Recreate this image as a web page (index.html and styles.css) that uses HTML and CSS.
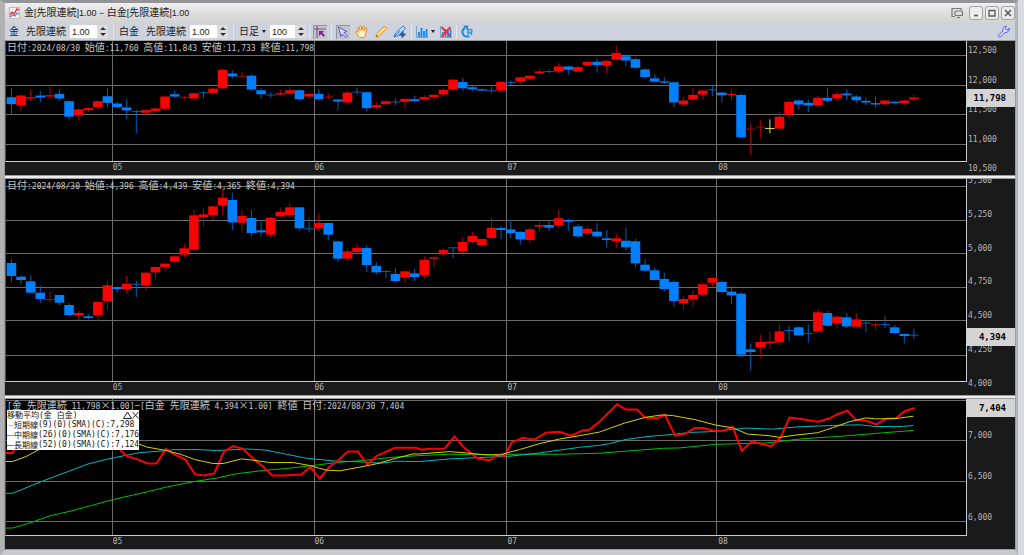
FILE: index.html
```html
<!DOCTYPE html>
<html lang="ja">
<head>
    <meta charset="UTF-8">
    <meta name="viewport" content="width=device-width, initial-scale=1.0">
    <title>金[先限連続]1.00 - 白金[先限連続]1.00</title>
    <link rel="stylesheet" href="styles.css">
</head>
<body>
    <div class="window">
        <header class="titlebar">
            <svg class="app-icon" width="11" height="12" viewBox="0 0 11 12">
                <rect x="0.5" y="0.5" width="10" height="11" fill="#f4f0f0" stroke="#c4bcbc"/>
                <path d="M1 8l2-3 2 2 3-5 2 1" fill="none" stroke="#e0383c" stroke-width="1.4"/>
                <path d="M1 10l3-2 2 1 2-3 2 1" fill="none" stroke="#4a86d8" stroke-width="1.2"/>
            </svg>
            <h1><span>金</span>[<span>先限連続</span>]1.00 − <span>白金</span>[<span>先限連続</span>]1.00</h1>
            <div class="window-buttons">
                <button class="plain" aria-label="別ウィンドウ">
                    <svg width="12" height="12" viewBox="0 0 12 12" fill="none" stroke="#777" stroke-width="1.2">
                        <path d="M4 9.500H1v-8h9V3"/>
                        <rect x="4" y="4" width="7.500" height="4.500" rx="1"/>
                        <path d="M6 10.500h3"/>
                    </svg>
                </button>
                <button aria-label="最小化"><svg width="12" height="12" viewBox="0 0 12 12"><path d="M4 8.500h4" stroke="#555" stroke-width="1.600"/></svg></button>
                <button aria-label="最大化"><svg width="12" height="12" viewBox="0 0 12 12"><path d="M3 3.500h6M3 3v6h6V3" fill="none" stroke="#555" stroke-width="1.300"/></svg></button>
                <button aria-label="閉じる"><svg width="12" height="12" viewBox="0 0 12 12"><path d="M3 3l6 6M9 3l-6 6" stroke="#555" stroke-width="1.500"/></svg></button>
            </div>
        </header>

        <div class="toolbar">
            <div class="tool-group">
                <span>金</span>
                <label for="goldRatio">先限連続</label>
                <div class="spinner">
                    <input type="text" id="goldRatio" value="1.00">
                    <span class="arrows"><button class="up" aria-label="増やす"></button><button class="down" aria-label="減らす"></button></span>
                </div>
            </div>
            <div class="tool-group">
                <span>白金</span>
                <label for="platinumRatio">先限連続</label>
                <div class="spinner">
                    <input type="text" id="platinumRatio" value="1.00">
                    <span class="arrows"><button class="up" aria-label="増やす"></button><button class="down" aria-label="減らす"></button></span>
                </div>
            </div>
            <div class="tool-group period">
                <button class="menu">日足<i class="caret"></i></button>
                <div class="spinner">
                    <input type="text" id="barCount" value="100" aria-label="本数">
                    <span class="arrows"><button class="up" aria-label="増やす"></button><button class="down" aria-label="減らす"></button></span>
                </div>
            </div>
            <div class="tool-group icons">
                <button class="icon pressed" aria-label="十字カーソル">
                    <svg width="12" height="12" viewBox="0 0 12 12">
                        <path d="M3 0v12M0 3h12" stroke="#8a4890" stroke-width="1.2"/>
                        <path d="M5 5h5L8.400 6.600 11 9.400 9.600 10.800 6.800 8 5 10z" fill="#8c1a98"/>
                    </svg>
                </button>
            </div>
            <div class="tool-group icons">
                <button class="icon pressed" aria-label="選択">
                    <svg width="12" height="12" viewBox="0 0 12 12"><path d="M1.500 1l8 4.500-2.500 1 3.500 3.500-1.500 1.500L5.500 8 4 10.500z" fill="#dedcff" stroke="#5850c8" stroke-linejoin="round"/></svg>
                </button>
                <button class="icon" aria-label="移動">
                    <svg width="14" height="14" viewBox="0 0 14 14"><path d="M4.600 12.500L2 9.200.8 7c0-1 1.200-1.200 2-.2l.8.8L2.300 3.400c-.2-1.200 1.200-1.400 1.600-.4L5 5.600 4.800 1.800c0-1.200 1.500-1.200 1.700 0L7 5.300l.9-3.600c.3-1 1.600-.8 1.500.3L9 5.800l1.700-2.400c.6-.8 1.700-.2 1.300.8l-1.300 3.900-.7 2.700-1.200 1.700z" fill="#fff3d2" stroke="#e58a1a" stroke-linejoin="round"/></svg>
                </button>
                <button class="icon" aria-label="鉛筆">
                    <svg width="14" height="14" viewBox="0 0 14 14"><path d="M2 12l1.200-3.600L10 1.600c.8-.6 2.800 1.200 2.300 2.200L5.400 10.700z" fill="#ffd98c" stroke="#e8921c" stroke-linejoin="round"/><path d="M1.500 12.500l.8-2.500 1.600 1.500z" fill="#a85a10"/><path d="M5 9.300l5.800-5.800" stroke="#fff6de"/></svg>
                </button>
                <button class="icon" aria-label="線の追加">
                    <svg width="14" height="14" viewBox="0 0 14 14"><path d="M1 12l1.500-4L10 1l2.500 2-5.500 7-4.500 1.500z" fill="#b8dcfa" stroke="#3878c8" stroke-linejoin="round"/><path d="M1.500 11.500L7 6" stroke="#3878c8"/><path d="M9.500 6.500v6M6.500 9.500h6" stroke="#1d4ea8" stroke-width="2"/></svg>
                </button>
            </div>
            <div class="tool-group icons">
                <button class="icon menu" aria-label="指標の追加">
                    <svg width="12" height="12" viewBox="0 0 12 12"><path d="M.5 0v11.500H12" fill="none" stroke="#7aa4cc"/><path d="M3 6v5M5.500 2v9M8 5v6M10.500 3v8" stroke="#1686ee" stroke-width="1.800"/></svg>
                    <i class="caret"></i>
                </button>
                <button class="icon" aria-label="指標の削除">
                    <svg width="12" height="12" viewBox="0 0 12 12"><path d="M.5 0v11.500H12" fill="none" stroke="#7aa4cc"/><path d="M3 6v5M5.500 3v8M8 5v6M10.500 3v8" stroke="#1686ee" stroke-width="1.600"/><path d="M1.500 1l9 9.500M10.500 1l-9 9.500" stroke="#e8343c" stroke-width="1.900"/></svg>
                </button>
            </div>
            <div class="tool-group icons reset">
                <button class="icon" aria-label="リセット">
                    <svg width="13" height="13" viewBox="0 0 13 13"><path d="M4 3C0 5 1 11 5.500 11.500h3" fill="none" stroke="#1c8ae0" stroke-width="2"/><path d="M2 .5h5v5z" fill="#1c8ae0"/><path d="M7 10V4.500h2.500a1.500 1.500 0 010 3H7M9.300 7.500L11 10" fill="none" stroke="#2c96ea" stroke-width="1.500"/></svg>
                </button>
            </div>
            <button class="icon settings" aria-label="設定">
                <svg width="13" height="13" viewBox="0 0 13 13"><path d="M1.500 10L6 6c-.6-2.500.8-4.800 3.500-5L8.300 3.300l.9 1.500 1.800.1L12.300 3c.3 2.800-1.800 4.900-4.300 4.500l-4.500 4.200c-1.200 1-3-.5-2-1.700z" fill="#dcdcff" stroke="#6460dc" stroke-linejoin="round"/></svg>
            </button>
        </div>

        <main class="panels">
            <section class="panel">
                <div class="plot">
                    <svg id="goldChart" viewBox="18 -57 2883 363" preserveAspectRatio="none"></svg>
                    <p class="readout"><span>日付</span>:2024/08/30 <span>始値</span>:11,760 <span>高値</span>:11,843 <span>安値</span>:11,733 <span>終値</span>:11,798</p>
                </div>
                <div class="scale gold">
                    <span>12,500</span><span>12,000</span><span>11,500</span><span>11,000</span><span>10,500</span>
                    <b class="last">11,798</b>
                </div>
                <div class="months"><span>05</span><span>06</span><span>07</span><span>08</span></div>
            </section>

            <section class="panel">
                <div class="plot">
                    <svg id="platinumChart" viewBox="18 9 2883 606" preserveAspectRatio="none"></svg>
                    <p class="readout"><span>日付</span>:2024/08/30 <span>始値</span>:4,396 <span>高値</span>:4,439 <span>安値</span>:4,365 <span>終値</span>:4,394</p>
                </div>
                <div class="scale platinum">
                    <span>5,500</span><span>5,250</span><span>5,000</span><span>4,750</span><span>4,500</span><span>4,250</span><span>4,000</span>
                    <b class="last">4,394</b>
                </div>
                <div class="months"><span>05</span><span>06</span><span>07</span><span>08</span></div>
            </section>

            <section class="panel">
                <div class="plot">
                    <svg id="spreadChart" viewBox="18 27 2883 411" preserveAspectRatio="none"></svg>
                    <p class="readout">[<span>金</span> <span>先限連続</span> 11,798<span>×</span>1.00]<span>−</span>[<span>白金</span> <span>先限連続</span> 4,394<span>×</span>1.00] <span>終値</span> <span>日付</span>:2024/08/30 7,404</p>
                    <div class="legend">
                        <div class="legend-title">
                            <div><span>移動平均</span>(<span>金</span> <span>白金</span>)</div>
                            <div class="legend-buttons">
                                <button aria-label="折りたたむ"><svg width="9" height="8" viewBox="0 0 9 8"><path d="M4.500 1L8.500 7.500H.5z" fill="none" stroke="#222"/></svg></button>
                                <button aria-label="閉じる"><svg width="7" height="8" viewBox="0 0 7 8"><path d="M.5 1l6 6.500M6.500 1l-6 6.500" stroke="#222"/></svg></button>
                            </div>
                        </div>
                        <div class="legend-row short"><span>短期線</span>(9)(0)(SMA)(C):7,298</div>
                        <div class="legend-row middle"><span>中期線</span>(26)(0)(SMA)(C):7,176</div>
                        <div class="legend-row long"><span>長期線</span>(52)(0)(SMA)(C):7,124</div>
                    </div>
                </div>
                <div class="scale spread">
                    <span>7,500</span><span>7,000</span><span>6,500</span><span>6,000</span>
                    <b class="last">7,404</b>
                </div>
                <div class="months"><span>05</span><span>06</span><span>07</span><span>08</span></div>
            </section>
        </main>
    </div>
    <script src="charts.js"></script>
</body>
</html>
```

FILE: styles.css
```css
* {
    box-sizing: border-box;
}

body {
    margin: 0;
    padding-right: 6px;
    height: 100vh;
    background: #dadae3;
    font-family: "Liberation Sans", "Noto Sans CJK JP", sans-serif;
    font-size: 10px;
    color: #222;
    overflow: hidden;
}

button {
    margin: 0;
    padding: 0;
    border: 0;
    background: none;
    font: inherit;
    color: inherit;
}

svg {
    display: block;
}

/* window frame */
.window {
    display: flex;
    flex-direction: column;
    height: 100%;
    border-top: 3px solid #929497;
    border-right: 3px solid #b4b4b8;
    border-bottom: 5px solid #c9c9cb;
    border-left: 5px solid #b2b2b2;
}

.titlebar {
    display: flex;
    align-items: center;
    gap: 4px;
    height: 20px;
    padding-left: 4px;
    background: linear-gradient(#f0f0f0, #dedede 50%, #d2d2d2);
}

.titlebar h1 {
    margin: 0;
    flex: 1;
    font-size: 9px;
    line-height: 16px;
    font-weight: normal;
    white-space: nowrap;
}

.titlebar h1 span {
    font-size: 10px;
}

.window-buttons {
    display: flex;
    gap: 2px;
}

.window-buttons button {
    padding: 1px;
    background: #ececec;
    border-radius: 3px;
    box-shadow: inset 0 0 0 1px #a4a4a4;
}

.window-buttons .plain {
    margin-right: 3px;
    background: none;
    box-shadow: none;
}

/* toolbar */
.toolbar {
    display: flex;
    align-items: center;
    height: 18px;
    padding-left: 4px;
    background: #ced2dc;
    border-bottom: 1px solid #a4a8b0;
}

.tool-group {
    display: flex;
    align-items: center;
    height: 14px;
    line-height: 14px;
    gap: 4px;
    margin-right: 5px;
    padding-right: 5px;
    border-right: 1px solid #e6e8ec;
}

.tool-group label {
    margin-left: 3px;
}

.tool-group.period {
    margin-right: 3px;
    padding-right: 3px;
}

.tool-group.icons {
    gap: 5px;
    margin-right: 4px;
    padding-right: 4px;
}

.tool-group.reset {
    border-right: 0;
}

.spinner {
    display: flex;
    width: 38px;
    height: 13px;
    background: #fff;
}

.period .spinner {
    width: 36px;
}

.spinner input {
    flex: 1;
    min-width: 0;
    padding: 0 0 0 2px;
    border: 0;
    background: none;
    font: inherit;
    font-size: 9px;
    color: #222;
}

.arrows {
    display: flex;
    flex-direction: column;
    width: 11px;
    background: #dcdcdc;
}

.arrows button {
    flex: 1;
    display: flex;
    align-items: center;
    justify-content: center;
}

.arrows button::before {
    content: "";
    border: 3px solid transparent;
}

.arrows .up::before {
    border-top: 0;
    border-bottom-color: #333;
}

.arrows .down::before {
    border-bottom: 0;
    border-top-color: #333;
}

.menu {
    display: flex;
    align-items: center;
    gap: 3px;
}

.caret {
    border: 2px solid transparent;
    border-top: 3px solid #222;
    border-bottom: 0;
}

.icon.pressed {
    padding: 1px;
    background: #c2c4cc;
    box-shadow: inset 1px 1px 0 #94969c;
}

.settings {
    margin-left: auto;
    margin-right: 5px;
}

/* chart panels */
.panels {
    flex: 1;
    min-height: 0;
    display: grid;
    grid-template-rows: 134fr 216fr 150fr;
    gap: 4px;
    padding-bottom: 1px;
    background: #eee;
}

.panel {
    display: grid;
    grid-template-columns: 1fr 48px;
    grid-template-rows: 1fr 13px;
    min-height: 0;
    background: #1a1a1a;
    box-shadow: 0 0 0 1px #9a9a9a;
    font-family: "DejaVu Sans Mono", "Noto Sans CJK JP", monospace;
    font-size: 8px;
    line-height: 12px;
    color: #b4b4b4;
}

.plot {
    position: relative;
    min-height: 0;
    background: #000;
    border-left: 1px solid #555;
    border-right: 1px solid #ccc;
    border-bottom: 1px solid #ccc;
}

.plot > svg {
    position: absolute;
    width: 100%;
    height: 100%;
}

.readout {
    position: relative;
    margin: 0;
    padding-left: 1px;
    white-space: nowrap;
    color: #c8c8c8;
}

.readout span {
    font-family: "Noto Sans CJK JP", sans-serif;
    font-size: 10px;
}

.scale {
    position: relative;
    grid-row: span 2;
    display: flex;
    flex-direction: column;
    justify-content: space-between;
    min-height: 0;
    padding-left: 1px;
    overflow: hidden;
}

.scale.gold {
    padding-top: 4px;
}

.scale.platinum {
    padding-bottom: 5px;
}

.scale.platinum span:first-child {
    margin-top: -4px;
}

.scale.spread {
    padding-bottom: 25px;
}

.scale.spread span:first-child {
    margin-top: -10px;
}

.last {
    position: absolute;
    left: 0;
    right: 0;
    padding-right: 9px;
    background: #d4d4d4;
    font-size: 9px;
    line-height: 18px;
    text-align: right;
    color: #000;
}

.gold .last {
    top: 36%;
}

.platinum .last {
    top: 69%;
}

.spread .last {
    top: 0;
}

.months {
    display: grid;
    grid-template-columns: 202fr 193fr 211fr 249fr;
    padding-left: 11.2%;
}

/* moving average legend */
.legend {
    position: absolute;
    top: 11px;
    left: 1px;
    background: #fff;
    line-height: 10px;
    color: #111;
    white-space: nowrap;
}

.legend span {
    font-family: "Noto Sans CJK JP", sans-serif;
    font-size: 8px;
    line-height: 10px;
}

.legend-title,
.legend-row {
    display: flex;
    align-items: center;
    height: 10px;
}

.legend-buttons {
    display: flex;
    margin-left: auto;
}

.legend-row::before {
    content: "";
    flex: none;
    width: 7px;
    border-top: 1px solid;
}

.legend-row.short::before {
    color: #e8e000;
}

.legend-row.middle::before {
    color: #00d0d8;
}

.legend-row.long::before {
    color: #00c820;
}

/* chart drawing */
.grid {
    stroke: #6c6c6c;
    vector-effect: non-scaling-stroke;
    shape-rendering: crispEdges;
}

.red {
    fill: #f00;
}

.blue {
    fill: #0080ff;
}

.yellow {
    fill: #e0e060;
}

.red.thin {
    fill: #b00000;
}

.blue.thin {
    fill: #005fb4;
}

.yellow.thin {
    fill: #e0e060;
}

.line {
    fill: none;
    stroke-width: 1px;
    vector-effect: non-scaling-stroke;
}

.line.price {
    stroke: #f00;
    stroke-width: 2px;
}

.line.short {
    stroke: #d8d000;
}

.line.middle {
    stroke: #00b8c0;
}

.line.long {
    stroke: #00c000;
}
```

FILE: charts.js
```js
// each bar: color, body top, body bottom, wick top, wick bottom
var gold = [
    "b 113 134 86 165", "r 108 138 104 157", "r 113 117 90 124", "b 108 114 94 128", "r 107 111 82 117",
    "b 103 117 88 123", "b 125 172 122 180", "r 150 167 147 182", "r 146 152 143 158", "r 125 143 123 152",
    "b 110 130 86 143", "b 132 143 126 147", "b 144 153 118 180", "b 155 157 152 222", "r 152 160 149 170",
    "r 147 155 144 159", "r 111 148 110 154", "b 104 111 92 114", "r 112 115 110 123", "r 101 117 99 119",
    "b 98 101 94 116", "r 87 100 84 102", "r 30 86 28 88", "b 41 50 32 56", "r 48 50 36 53",
    "b 48 90 43 94", "b 92 104 86 117", "b 105 107 98 114", "r 101 105 91 108", "r 92 102 82 105",
    "b 92 119 90 123", "r 103 111 99 115", "b 103 119 88 122", "r 111 114 102 119", "b 120 126 118 153",
    "r 99 129 93 130", "b 96 98 84 103", "b 98 146 96 156", "r 137 144 127 150", "r 125 134 123 136",
    "b 126 128 117 136", "r 118 127 117 148", "b 119 125 108 127", "r 113 120 107 123", "r 106 113 103 123",
    "r 91 105 86 111", "r 60 89 57 94", "b 67 86 55 93", "b 83 89 78 96", "b 89 93 87 95",
    "b 92 95 82 101", "r 67 93 65 95", "b 67 69 62 76", "r 53 66 51 70", "r 48 57 46 63",
    "r 35 40 27 42", "b 34 36 30 40", "r 20 34 9 40", "b 20 30 18 45", "r 22 35 17 37",
    "r 6 17 4 18", "b 6 16 -4 38", "r 3 18 -1 40", "r -21 0 -43 1", "b -11 2 -17 20",
    "b -2 24 -6 27", "b 29 52 26 54", "b 56 66 43 68", "b 65 69 52 71", "b 68 129 66 143",
    "r 123 135 112 141", "r 106 119 86 122", "r 93 105 91 120", "b 89 91 78 110", "b 99 107 97 129",
    "r 103 107 88 123", "b 106 234 102 237", "r 208 211 191 288", "r 202 204 182 238", "y 206 209 180 222",
    "r 172 208 158 210", "r 127 166 123 178", "b 123 135 120 150", "b 130 138 120 158", "r 115 138 109 141",
    "b 115 124 84 126", "r 104 117 97 126", "b 102 107 89 122", "b 111 122 106 131", "b 124 129 113 138",
    "b 131 135 112 143", "r 123 134 120 135", "b 127 131 123 134", "r 123 131 121 137", "r 114 119 106 123"
];

var platinum = [
    "b 261 300 250 318", "b 302 312 299 324", "b 316 350 298 352", "b 350 369 328 381", "r 369 371 346 380",
    "b 357 380 356 387", "b 387 417 380 419", "r 411 418 405 432", "b 421 426 414 431", "r 378 418 375 435",
    "r 328 375 315 402", "b 334 339 331 350", "r 323 339 300 351", "b 323 326 315 363", "r 290 329 287 344",
    "r 273 289 272 308", "r 263 273 261 286", "r 241 257 237 260", "r 217 236 203 243", "r 118 221 102 222",
    "r 115 123 95 150", "r 91 117 88 132", "r 65 88 38 117", "b 72 139 50 162", "r 120 140 102 167",
    "b 126 171 102 181", "b 163 169 131 181", "r 125 176 123 186", "r 108 121 94 124", "r 94 117 80 125",
    "b 94 157 93 164", "b 157 159 126 170", "r 141 157 112 166", "b 141 176 140 193", "b 196 248 195 258",
    "r 226 248 217 256", "r 216 228 203 236", "b 216 267 207 287", "b 270 289 258 294", "b 285 287 282 305",
    "b 294 315 276 318", "r 286 305 283 322", "b 292 303 279 315", "r 251 298 241 308", "r 244 248 242 274",
    "r 222 235 217 242", "b 214 217 213 246", "r 198 226 184 236", "r 180 198 167 203", "r 189 207 187 210",
    "r 156 186 126 187", "b 156 162 150 189", "b 160 171 132 186", "b 168 190 166 206", "r 160 192 153 202",
    "r 147 152 138 167", "b 147 155 134 165", "r 127 147 102 155", "b 132 137 128 165", "b 151 181 143 186",
    "r 158 173 151 177", "b 167 181 141 184", "b 187 192 162 215", "r 187 195 173 215", "b 194 214 155 224",
    "b 196 262 189 272", "b 266 284 249 286", "b 283 312 276 313", "b 309 339 290 347", "b 318 375 313 392",
    "r 369 382 361 399", "r 357 370 342 392", "r 325 356 320 357", "r 306 320 304 334", "b 318 348 313 354",
    "b 347 358 330 384", "b 353 536 349 543", "b 520 528 502 584", "r 498 514 475 548", "r 497 501 467 518",
    "r 466 499 445 507", "b 462 464 450 495", "b 454 478 450 479", "b 471 473 445 500", "r 409 466 397 468",
    "b 411 449 405 450", "r 422 442 419 456", "b 424 451 411 456", "r 430 452 411 453", "b 440 443 431 468",
    "r 444 447 440 460", "b 444 447 419 456", "b 454 471 447 473", "b 474 480 473 502", "b 476 479 459 490"
];

var spread = {
    long: "18,417 38,417 100,398 150,380 220,364 270,350 340,331 440,308 500,293 580,277 650,266 710,253 790,243 870,236 940,228 1010,219 1100,212 1180,203 1260,198 1350,194 1440,195 1560,194 1680,194 1800,191 1900,183 1990,176 2040,175 2150,164 2220,162 2300,160 2360,153 2410,147 2520,140 2630,131 2743,122",
    middle: "18,312 38,312 120,278 210,244 265,223 330,207 420,189 490,184 520,180 600,180 650,183 740,178 795,181 860,194 920,206 1000,214 1080,217 1145,221 1190,215 1260,216 1350,208 1440,204 1530,200 1620,190 1740,173 1800,167 1830,162 1880,149 1950,140 2020,134 2070,128 2130,126 2200,119 2240,115 2320,118 2400,111 2500,107 2580,105 2630,110 2710,110 2743,107",
    price: "18,190 38,190 50,165 130,120 340,150 365,185 382,200 410,208 443,222 470,222 498,178 525,195 557,210 585,254 612,258 643,252 672,187 700,169 730,178 760,207 790,232 818,258 848,258 905,255 932,232 960,268 988,233 1012,215 1045,186 1075,186 1103,225 1132,199 1187,174 1250,174 1265,180 1290,177 1335,177 1365,140 1390,171 1434,207 1470,212 1495,195 1515,200 1536,159 1570,144 1605,150 1640,129 1680,126 1715,138 1750,122 1770,120 1800,96 1853,43 1880,59 1913,59 1938,84 1973,85 1997,75 2027,138 2058,132 2086,115 2112,115 2140,122 2175,123 2200,111 2228,184 2257,155 2285,162 2315,170 2343,145 2371,83 2400,87 2457,96 2490,86 2515,73 2545,62 2570,90 2600,93 2632,104 2660,87 2690,85 2718,63 2747,54",
    short: "18,216 38,216 80,200 120,178 200,130 330,130 410,160 440,172 500,183 545,195 585,210 640,222 670,222 725,208 760,212 810,219 880,219 930,228 980,242 1020,244 1075,234 1130,223 1190,206 1240,193 1260,193 1350,186 1400,190 1460,196 1500,196 1560,180 1620,162 1680,148 1740,138 1800,127 1830,116 1875,100 1940,82 1990,75 2020,77 2090,90 2150,106 2200,114 2245,133 2310,138 2340,143 2390,136 2455,129 2500,114 2550,96 2600,84 2630,87 2690,86 2743,79"
};

var months = [337, 943, 1520, 2153];
var colors = { r: "red", b: "blue", y: "yellow" };

function add(svg, name, attrs) {
    var el = document.createElementNS("http://www.w3.org/2000/svg", name);
    for (var key in attrs) {
        el.setAttribute(key, attrs[key]);
    }
    svg.appendChild(el);
}

function drawGrid(svg, rows) {
    rows.forEach(function (y) {
        add(svg, "line", { class: "grid", x1: 18, x2: 2901, y1: y, y2: y });
    });
    months.forEach(function (x) {
        add(svg, "line", { class: "grid", x1: x, x2: x, y1: -60, y2: 620 });
    });
}

function drawCandles(svg, bars) {
    bars.forEach(function (bar, i) {
        var b = bar.split(" ");
        var x = 34 + i * 28.83;
        var height = b[2] - b[1];
        var color = colors[b[0]];
        add(svg, "rect", { class: color + " thin", x: x - 1, y: b[3], width: 3, height: b[4] - b[3] });
        add(svg, "rect", { class: color + (height < 4 ? " thin" : ""), x: x - 14, y: b[1], width: 28.8, height: Math.max(height, 3) });
    });
}

var goldChart = document.getElementById("goldChart");
drawGrid(goldChart, [-12, 77, 166, 255]);
drawCandles(goldChart, gold);

var platinumChart = document.getElementById("platinumChart");
drawGrid(platinumChart, [31, 132, 233, 333, 434, 537]);
drawCandles(platinumChart, platinum);

var spreadChart = document.getElementById("spreadChart");
drawGrid(spreadChart, [31, 153, 275, 397]);
for (var name in spread) {
    add(spreadChart, "polyline", { class: "line " + name, points: spread[name] });
}
```
